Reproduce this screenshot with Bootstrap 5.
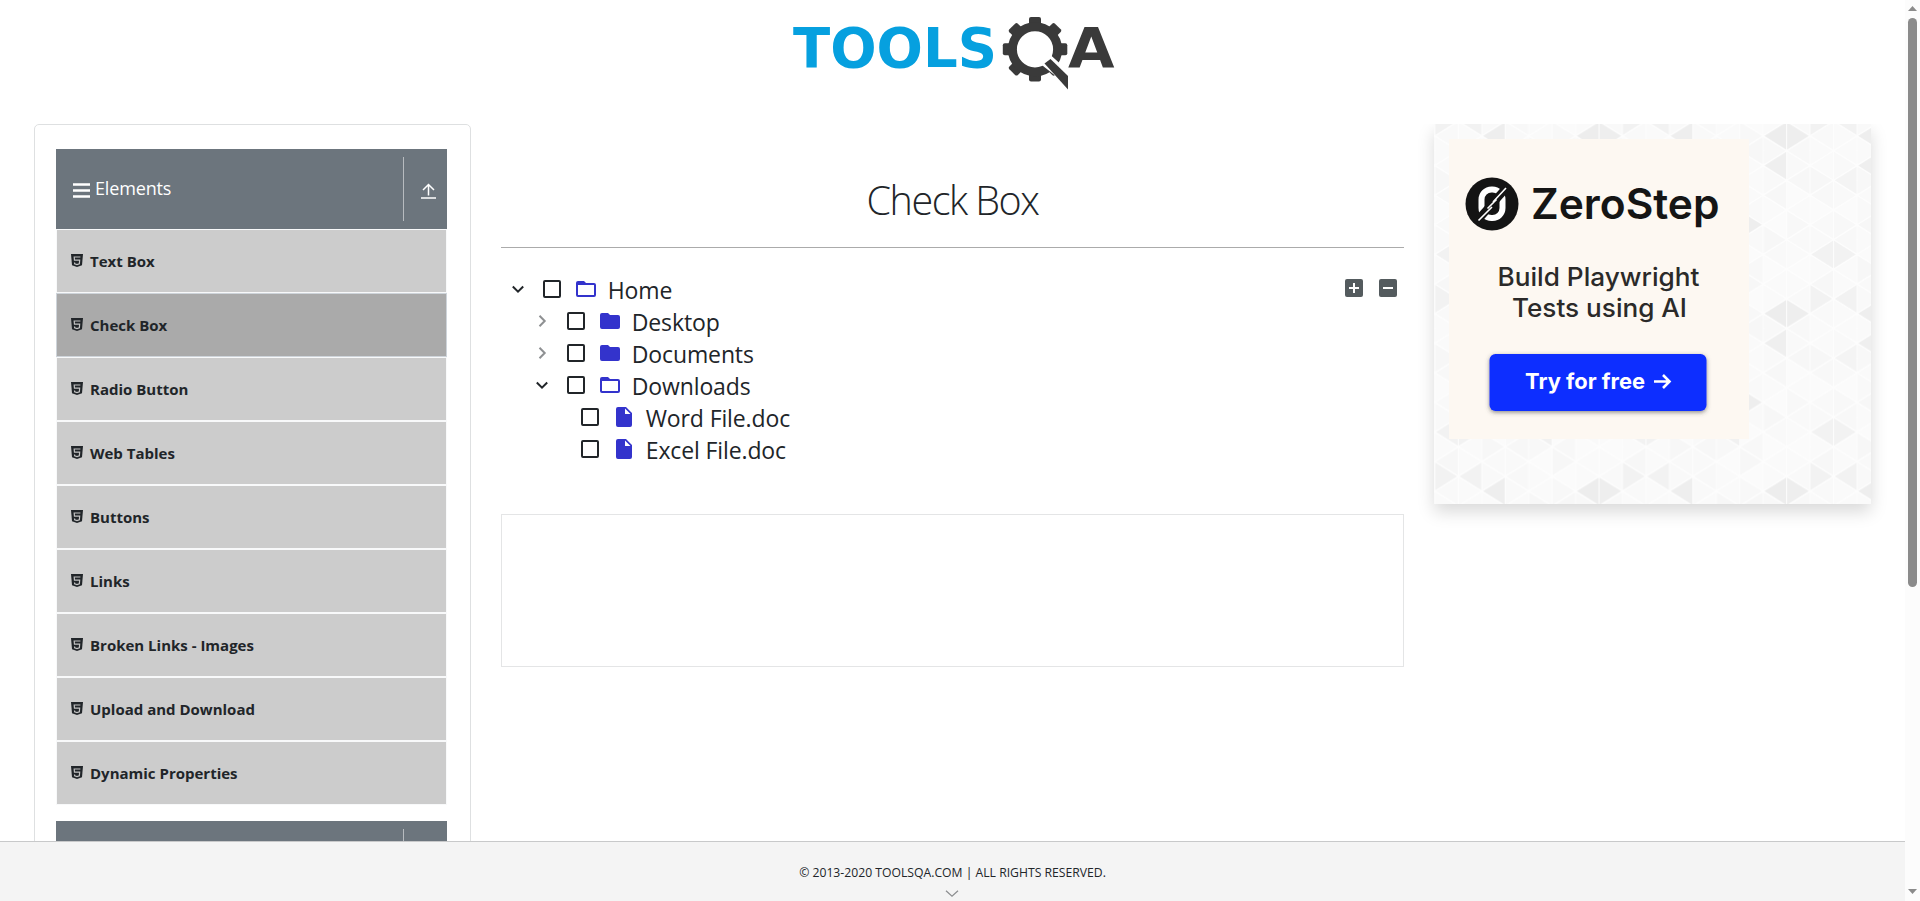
<!DOCTYPE html>
<html lang="en">
<head>
<meta charset="utf-8">
<meta name="viewport" content="width=device-width, initial-scale=1">
<title>ToolsQA - Check Box</title>
<link href="https://cdn.jsdelivr.net/npm/bootstrap@5.3.0/dist/css/bootstrap.min.css" rel="stylesheet">
<style>
  body { font-family: "Open Sans", "Noto Sans", sans-serif; color: #212529; height: 100vh; overflow: hidden; }
  svg { display: block; }
  .page { height: 901px; min-width: 0; }
  .site-head { height: 124px; padding-top: 12px; flex: none; }
  .content { padding: 0 19px; min-height: 0; overflow: hidden; }
  .content > .row { --bs-gutter-x: 30px; margin: 0; }
  .side { border: 1px solid #dee0e1; border-radius: 5px; padding: 24px 23px 0 21px; height: 1100px; }
  .group-head { height: 80px; background: #6c757d; color: #fff; padding: 8px 0 8px 17px; font-size: 18px; letter-spacing: -.15px; }
  .group-head .toggle { width: 44px; height: 64px; border-left: 1px solid #b7bbbf; padding: 4px 0 0 6px; }
  .group-title { gap: 5px; }
  .group-title span { position: relative; top: -1px; }
  .group-title svg { position: relative; top: 1px; }
  .item { height: 64px; border: 1px solid #f8f9fa; background: #ccc; padding: 0 0 0 14px; gap: 7px; font-size: 15px; font-weight: 700; }
  .item.on { background: #aaa; border-color: #ced4da; }
  .item svg { margin-bottom: 2px; }
  .title { font-size: 39.5px; font-weight: 300; line-height: 48px; letter-spacing: -1.5px; margin: 52px 0 23px; }
  .rule { border-top: 1px solid #ababab; height: 0; }
  .tree { padding: 25px 0 0; font-size: 23px; letter-spacing: -.12px; position: relative; }
  .node { height: 32px; }
  .node .chev { width: 16px; margin: 0 17px 0 9px; }
  .node .box { width: 18px; height: 18px; border: 2px solid #212529; border-radius: 2px; margin-right: 15px; }
  .node .ic { width: 20px; margin-right: 12px; }
  .node > * { flex: none; }
  .node .chev, .node .box, .node .ic { margin-top: -1px; }
  .node span:last-child { margin-top: 2px; }
  .lvl1 { padding-left: 24px; }
  .lvl2 { padding-left: 80px; }
  .tools { position: absolute; right: 7px; top: 31px; gap: 16px; }
  .result { height: 153px; border: 1px solid #e4e5e6; margin-top: 49px; }
  .advert { width: 437px; height: 380px; box-shadow: 0 8px 16px rgba(0,0,0,.15); }
  .foot { height: 60px; flex: none; background: #f4f4f4; border-top: 1px solid #c8c9ca; font-size: 12.2px; padding-top: 22px; line-height: 18px; }
  .foot svg { margin-top: 8px; }
  .scroller { width: 15px; background: #fcfcfc; flex: none; padding: 6px 3px 7px; }
  .thumb { width: 9px; height: 569px; border-radius: 5px; background: #8b8b8b; margin-top: 7px; }
</style>
</head>
<body>
<svg width="0" height="0" class="position-absolute">
  <symbol id="html5" viewBox="0 0 12 13"><path fill="#212529" d="M0 0h12l-1 11.300L6 13l-5-1.700z"/><path d="M9.400 3H3.200l.25 3.200h5.200l-.3 3.500-2.350.8-2.350-.8-.1-1.200" fill="none" stroke="#c4c4c4" stroke-width="1.200"/></symbol>
  <symbol id="down" viewBox="0 0 16 16"><path d="M2.800 5.500L8 10.600l5.200-5.100" fill="none" stroke="#212529" stroke-width="2"/></symbol>
  <symbol id="right" viewBox="0 0 16 16"><path d="M5.500 2.800L10.700 8l-5.200 5.200" fill="none" stroke="#8e9092" stroke-width="2"/></symbol>
  <symbol id="folder" viewBox="0 0 20 16"><path d="M2 0h6l2 2h8a2 2 0 0 1 2 2v10a2 2 0 0 1-2 2H2a2 2 0 0 1-2-2V2a2 2 0 0 1 2-2z" fill="#33c"/></symbol>
  <symbol id="folder-open" viewBox="0 0 20 16"><path d="M2 0h6l2 2h8a2 2 0 0 1 2 2v10a2 2 0 0 1-2 2H2a2 2 0 0 1-2-2V2a2 2 0 0 1 2-2zM2 4v10h16V4z" fill="#33c" fill-rule="evenodd"/></symbol>
  <symbol id="file" viewBox="0 0 16 20"><path d="M2 0h8l6 6v12a2 2 0 0 1-2 2H2a2 2 0 0 1-2-2V2a2 2 0 0 1 2-2zM9 1.500V7h5.500z" fill="#33c" fill-rule="evenodd"/></symbol>
  <symbol id="bars" viewBox="0 0 17 15"><path d="M0 1.500h17M0 7.500h17M0 13.500h17" stroke="#fff" stroke-width="2.500"/></symbol>
</svg>

<div class="d-flex">
  <div class="page flex-grow-1 d-flex flex-column">
    <header class="site-head d-flex justify-content-center">
      <svg width="330" height="82" viewBox="788 12 330 82" font-family="DejaVu Sans" font-weight="700" font-size="56">
        <text x="793" y="66.500" textLength="204" lengthAdjust="spacingAndGlyphs" fill="#06a0df">TOOLS</text>
        <g fill="#3a3a3a">
          <g id="teeth"><rect x="1029" y="17" width="12" height="12" rx="2"/><rect x="1029" y="69.500" width="12" height="12" rx="2"/></g>
          <use href="#teeth" transform="rotate(45 1035 49.300)"/>
          <use href="#teeth" transform="rotate(90 1035 49.300)"/>
          <use href="#teeth" transform="rotate(135 1035 49.300)"/>
        </g>
        <circle cx="1035" cy="49.300" r="22.600" fill="none" stroke="#3a3a3a" stroke-width="9"/>
        <path d="M1042 64l8-8 20 18v12z" fill="#fff" stroke="#fff" stroke-width="2"/>
        <path d="M1044.500 63.500l6-4.500 17.500 17v13.500z" fill="#3a3a3a"/>
        <text x="1068" y="66.500" textLength="46.500" lengthAdjust="spacingAndGlyphs" fill="#3a3a3a">A</text>
      </svg>
    </header>

    <main class="content flex-grow-1">
      <div class="row">
        <aside class="col-3">
          <div class="side">
            <div class="group-head d-flex">
              <div class="group-title d-flex align-items-center flex-grow-1"><svg width="17" height="15"><use href="#bars"/></svg><span>Elements</span></div>
              <div class="toggle d-flex align-items-center justify-content-center"><svg width="15" height="16" viewBox="0 0 15 16"><path d="M7.500 12.500V1.500M2 7l5.500-5.500L13 7M0 15h15" fill="none" stroke="#fff" stroke-width="1.500"/></svg></div>
            </div>
            <div class="item d-flex align-items-center"><svg width="12" height="13"><use href="#html5"/></svg><span>Text Box</span></div>
            <div class="item on d-flex align-items-center"><svg width="12" height="13"><use href="#html5"/></svg><span>Check Box</span></div>
            <div class="item d-flex align-items-center"><svg width="12" height="13"><use href="#html5"/></svg><span>Radio Button</span></div>
            <div class="item d-flex align-items-center"><svg width="12" height="13"><use href="#html5"/></svg><span>Web Tables</span></div>
            <div class="item d-flex align-items-center"><svg width="12" height="13"><use href="#html5"/></svg><span>Buttons</span></div>
            <div class="item d-flex align-items-center"><svg width="12" height="13"><use href="#html5"/></svg><span>Links</span></div>
            <div class="item d-flex align-items-center"><svg width="12" height="13"><use href="#html5"/></svg><span>Broken Links - Images</span></div>
            <div class="item d-flex align-items-center"><svg width="12" height="13"><use href="#html5"/></svg><span>Upload and Download</span></div>
            <div class="item d-flex align-items-center"><svg width="12" height="13"><use href="#html5"/></svg><span>Dynamic Properties</span></div>
            <div class="group-head d-flex mt-3"><div class="flex-grow-1"></div><div class="toggle"></div></div>
          </div>
        </aside>

        <section class="col-6">
          <h1 class="title text-center"><span>Check Box</span></h1>
          <div class="rule"></div>
          <div class="tree">
            <div class="node d-flex align-items-center"><svg class="chev" height="16"><use href="#down"/></svg><span class="box"></span><svg class="ic" height="16"><use href="#folder-open"/></svg><span>Home</span></div>
            <div class="node lvl1 d-flex align-items-center"><svg class="chev" height="16"><use href="#right"/></svg><span class="box"></span><svg class="ic" height="16"><use href="#folder"/></svg><span>Desktop</span></div>
            <div class="node lvl1 d-flex align-items-center"><svg class="chev" height="16"><use href="#right"/></svg><span class="box"></span><svg class="ic" height="16"><use href="#folder"/></svg><span>Documents</span></div>
            <div class="node lvl1 d-flex align-items-center"><svg class="chev" height="16"><use href="#down"/></svg><span class="box"></span><svg class="ic" height="16"><use href="#folder-open"/></svg><span>Downloads</span></div>
            <div class="node lvl2 d-flex align-items-center"><span class="box"></span><svg class="ic" height="20"><use href="#file"/></svg><span>Word File.doc</span></div>
            <div class="node lvl2 d-flex align-items-center"><span class="box"></span><svg class="ic" height="20"><use href="#file"/></svg><span>Excel File.doc</span></div>
            <div class="tools d-flex">
              <svg width="18" height="18"><rect width="18" height="18" rx="2" fill="#545b5e"/><path d="M4 9h10M9 4v10" stroke="#fff" stroke-width="2"/></svg>
              <svg width="18" height="18"><rect width="18" height="18" rx="2" fill="#545b5e"/><path d="M4 9h10" stroke="#fff" stroke-width="2"/></svg>
            </div>
          </div>
          <div class="result"></div>
        </section>

        <aside class="col-3">
          <div class="advert">
            <svg width="437" height="380" font-family="Inter">
              <defs><pattern id="tri" x=".9" y="-2.800" width="187.600" height="177.600" patternUnits="userSpaceOnUse"></pattern>
              <filter id="sh" x="-10%" y="-20%" width="120%" height="150%"><feDropShadow dx="0" dy="1.500" stdDeviation="2" flood-color="#444" flood-opacity=".6"/></filter></defs>
              <rect width="437" height="380" fill="#fdfdfd"/>
              <rect width="437" height="380" fill="url(#tri)"/>
              <rect x="15" y="15" width="300" height="300" fill="#fdf8f2"/>
              <g transform="translate(-1.500 0)">
                <circle cx="59.500" cy="80" r="26.500" fill="#141414"/>
                <rect x="49" y="65.500" width="21" height="28.500" rx="10" fill="none" stroke="#fff" stroke-width="6"/>
                <path d="M44.500 97L74.500 63" stroke="#141414" stroke-width="8"/>
                <path d="M46 96.500L59.500 83M73.500 64L60.500 78M55 84.500l9-9" stroke="#fff" stroke-width="1.600"/>
                <text x="98.500" y="95" font-size="42.500" font-weight="600" fill="#151515" textLength="188.500" lengthAdjust="spacingAndGlyphs">ZeroStep</text>
                <g font-size="25.500" font-weight="500" fill="#2b2a29">
                  <text x="65" y="162" textLength="202" lengthAdjust="spacingAndGlyphs">Build Playwright</text>
                  <text x="79.500" y="193" textLength="175" lengthAdjust="spacingAndGlyphs">Tests using AI</text>
                </g>
                <rect x="57" y="230" width="217" height="57" rx="6" fill="#0a2fff" filter="url(#sh)"/>
                <text x="92.500" y="264.500" font-size="21.500" font-weight="700" fill="#fff" textLength="120" lengthAdjust="spacingAndGlyphs">Try for free</text>
                <path d="M221.500 257.500h15M230.500 251l6.500 6.500-6.500 6.500" fill="none" stroke="#fff" stroke-width="2.600"/>
              </g>
            </svg>
          </div>
        </aside>
      </div>
    </main>

    <footer class="foot text-center">
      <span>© 2013-2020 TOOLSQA.COM | ALL RIGHTS RESERVED.</span>
      <svg class="mx-auto" width="16" height="8" viewBox="0 0 16 8"><path d="M1 .7l6 5.600 6-5.600" fill="none" stroke="#8c8e90" stroke-width="1.200"/></svg>
    </footer>
  </div>
  <div class="scroller d-flex flex-column">
    <svg width="9" height="5"><path d="M0 5L4.500 0 9 5z" fill="#8b8b8b"/></svg>
    <div class="thumb"></div>
    <svg class="mt-auto" width="9" height="5"><path d="M0 0L4.500 5 9 0z" fill="#8b8b8b"/></svg>
  </div>
</div>
<script src="https://cdn.jsdelivr.net/npm/bootstrap@5.3.0/dist/js/bootstrap.bundle.min.js"></script>
<script>
  // Triangle backdrop: 8 strips by 6 cells, each cell holds a left- and a right-pointing triangle.
  // Keys are strip, direction, half-row index of the triangle's centre.
  const w = 23.45, h = 29.6, tile = document.getElementById('tri');
  const dark = {'6L1':'#ededed','7R1':'#eee','6L3':'#efefef','2L1':'#eee','2L3':'#efefef','0R0':'#f2f2f2','0R12':'#f2f2f2',
    '1L0':'#f2f2f2','1L12':'#f2f2f2','4L9':'#f1f1f1','0L9':'#f2f2f2','1R9':'#f2f2f2','1L4':'#f4f4f4','5R7':'#eee'};
  const light = ['#f9f9f9','#f8f8f8','#fafafa','#f9f9f9','#fbfbfb','#f7f7f7','#fafafa'];
  let out = '';
  for (let s = 0; s < 8; s++) for (let m = 0; m <= 12; m++) {
    const c = m * h / 2, x = s * w;
    const left = (s + m) % 2 === 1;
    const key = s + (left ? 'L' : 'R') + m;
    const fill = dark[key] || light[(s * 5 + (m % 12) * 3 + s * m % 4) % 7];
    const pts = left ? [x + 1.2, c, x + w - .5, c - h/2 + 1.2, x + w - .5, c + h/2 - 1.2]
                     : [x + w - 1.2, c, x + .5, c - h/2 + 1.2, x + .5, c + h/2 - 1.2];
    out += `<polygon points="${pts}" fill="${fill}"/>`;
  }
  tile.innerHTML = out;
</script>
</body>
</html>
